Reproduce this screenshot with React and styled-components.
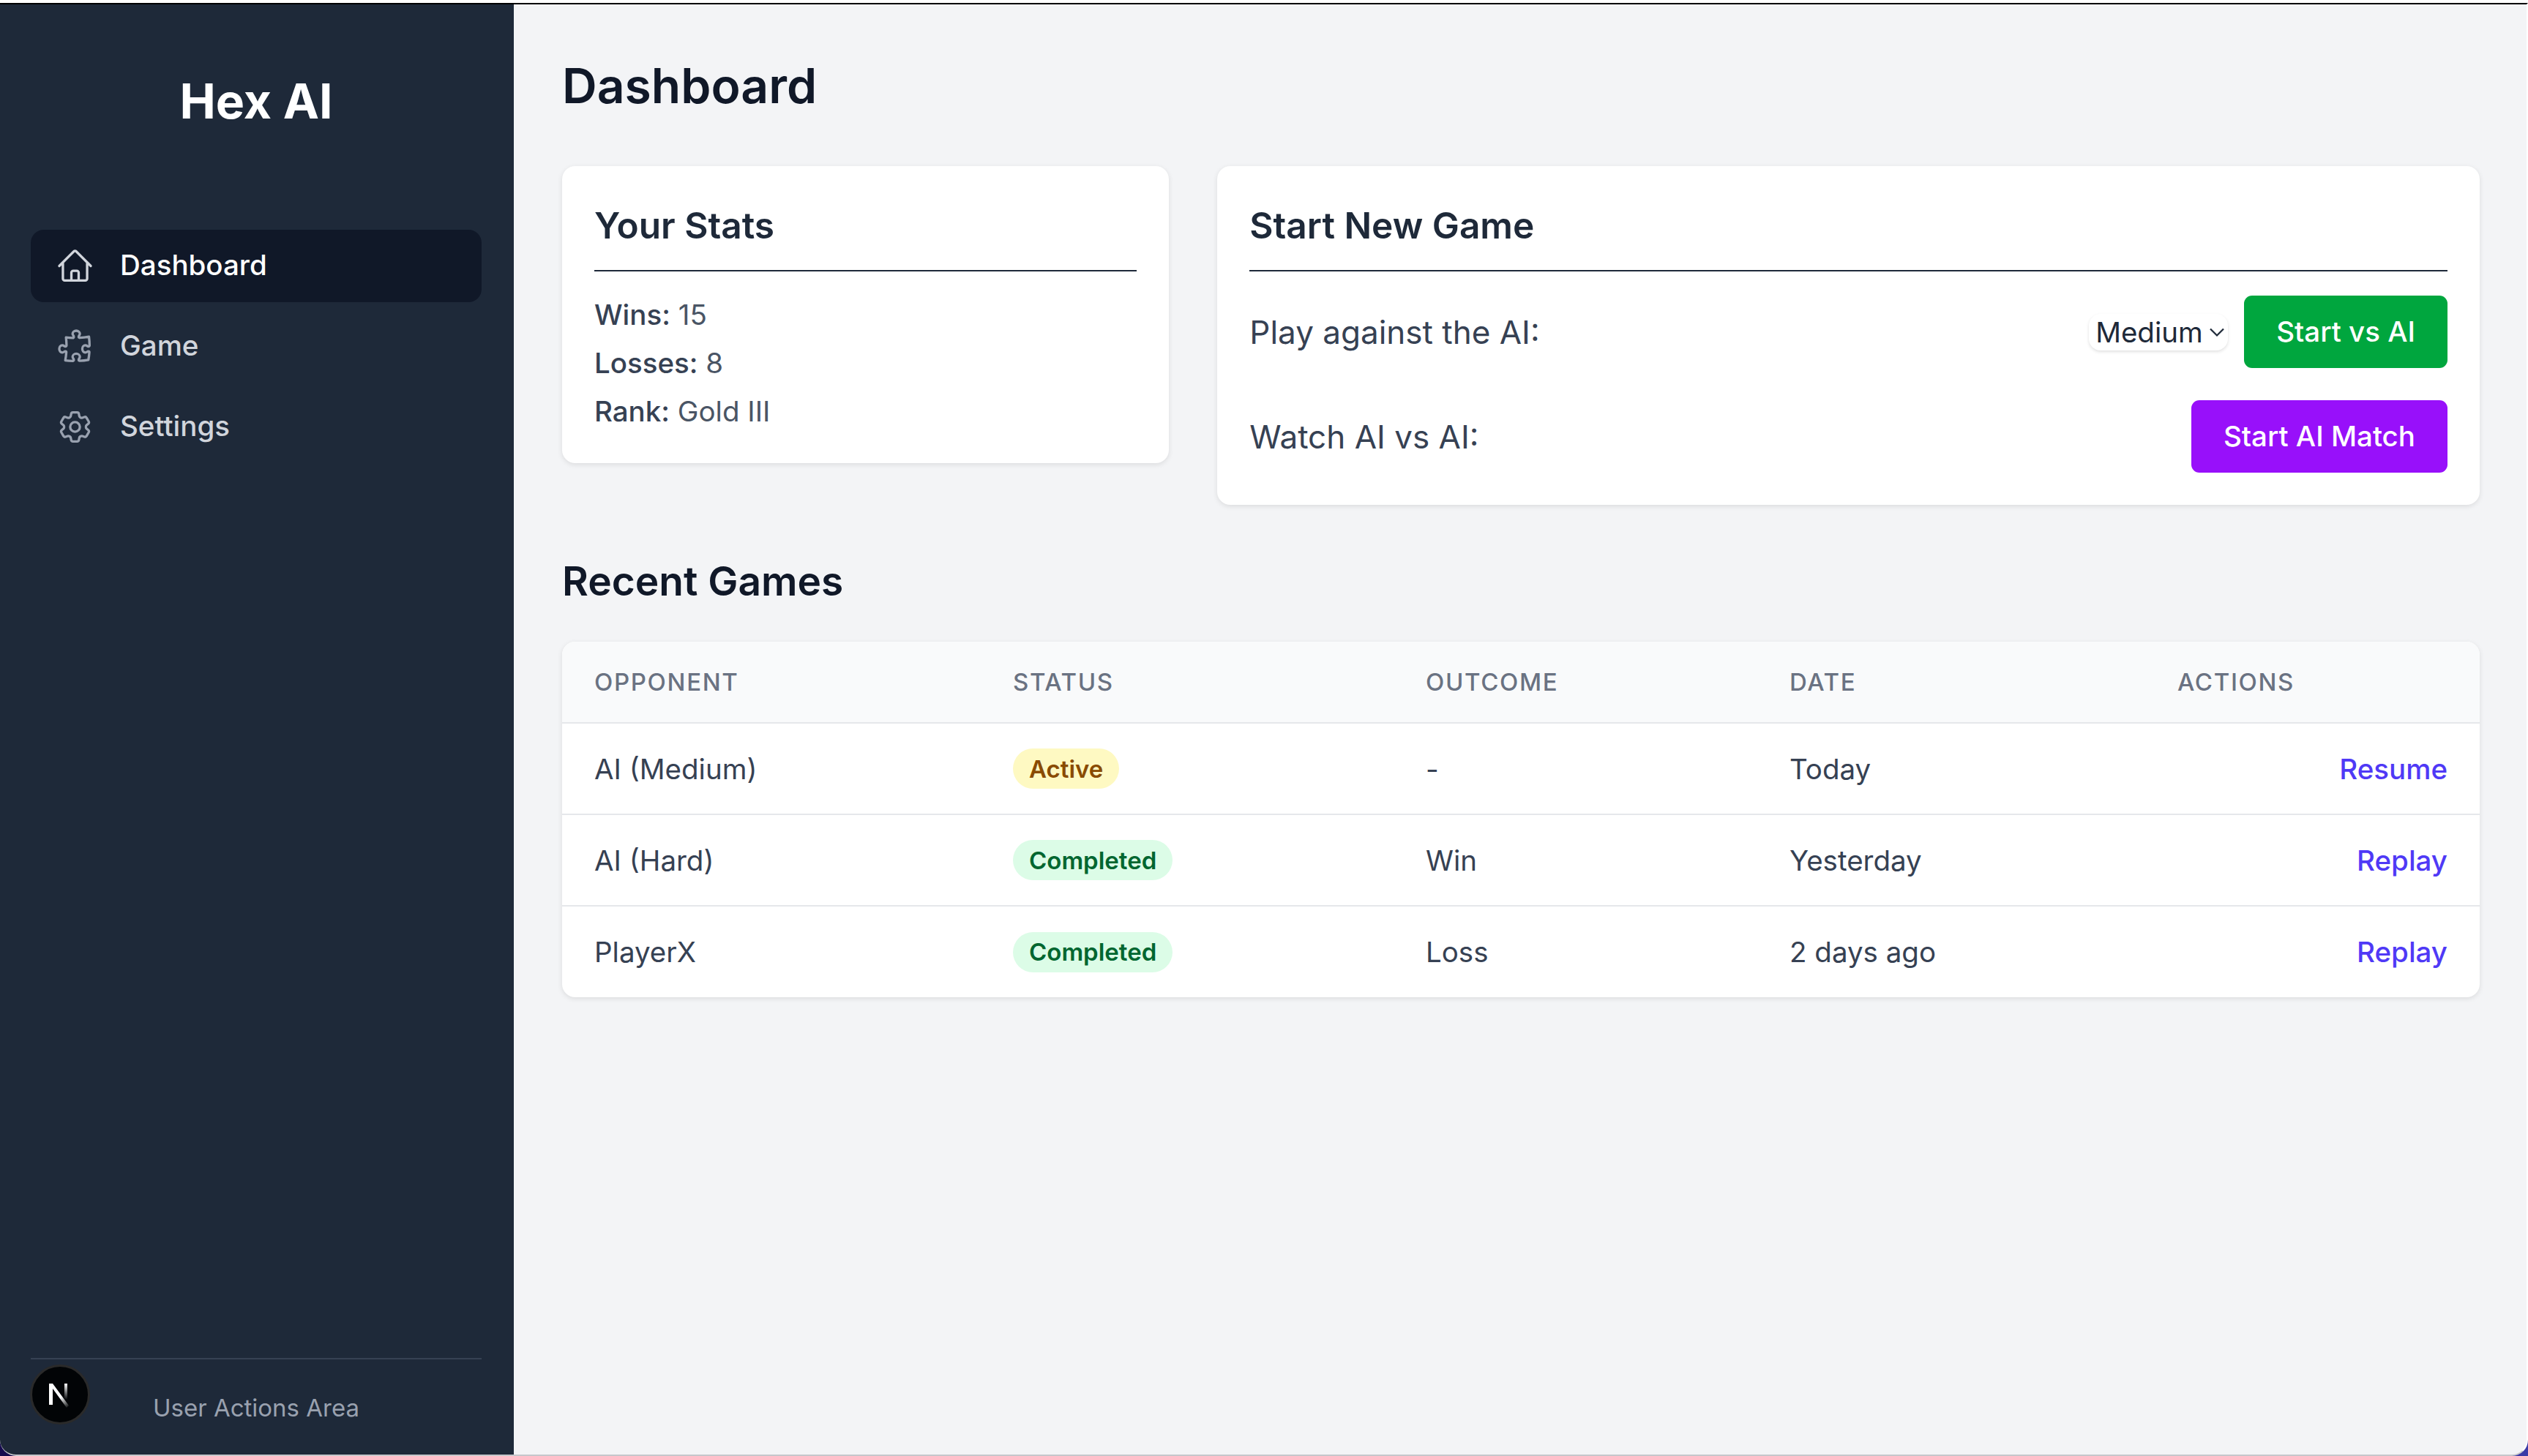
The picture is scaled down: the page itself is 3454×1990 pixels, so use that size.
import React from "react";
import styled, { createGlobalStyle } from "styled-components";
import { HiOutlineHome, HiOutlinePuzzlePiece, HiOutlineCog6Tooth } from "react-icons/hi2";

const Global = createGlobalStyle`
  * { box-sizing: border-box; }
  html, body { margin: 0; padding: 0; background: #fff; }
  body { font-family: Inter, "Liberation Sans", sans-serif; -webkit-font-smoothing: antialiased; }
`;

const Desktop = styled.div`
  width: 3454px;
  height: 1990px;
  padding-top: 4px;
  background: linear-gradient(#fff 0 4px, transparent 4px), linear-gradient(90deg, #160a4e 0%, #3a3aa6 100%);
  overflow: hidden;
`;
const Frame = styled.div`
  width: 100%;
  height: 1986px;
  display: flex;
  overflow: hidden;
  position: relative;
  background: #f3f4f6;
  border-top: 2px solid #000;
  border-right: 2px solid #fff;
  border-bottom: 2px solid #c6c7cb;
  border-radius: 0 0 22px 22px;
`;
const Sidebar = styled.aside`
  flex: none;
  width: 702px;
  display: flex;
  flex-direction: column;
  padding: 0 44px 0 42px;
  background: #1e2939;
`;
const Logo = styled.h1`
  margin: 95px 0 1px;
  height: 74px;
  font-size: 66px;
  line-height: 74px;
  font-weight: 700;
  text-align: center;
  color: #fff;
`;
const Nav = styled.nav`
  margin-top: 138px;
  display: flex;
  flex-direction: column;
  gap: 11px;
  flex: 1;
`;
const NavItem = styled.a`
  display: flex;
  align-items: center;
  gap: 35px;
  height: 99px;
  padding: 0 34px 3px;
  border-radius: 18px;
  font-size: 38.5px;
  font-weight: 500;
  color: ${(p) => (p.$active ? "#fff" : "#d1d5dc")};
  background: ${(p) => (p.$active ? "#101828" : "transparent")};
  svg {
    flex: none;
    width: 53px;
    height: 53px;
    margin-bottom: -3px;
    color: ${(p) => (p.$active ? "#d1d5dc" : "#99a1af")};
  }
`;
const SideFooter = styled.div`
  height: 132px;
  padding-top: 44px;
  border-top: 2px solid #364153;
  font-size: 33px;
  line-height: 44px;
  text-align: center;
  color: #99a1af;
`;
const DevBadge = styled.div`
  position: absolute;
  left: 41px;
  bottom: 41px;
  width: 82px;
  height: 82px;
  display: flex;
  align-items: center;
  justify-content: center;
  border-radius: 50%;
  background: #020406;
  border: 3px solid #2a2a2a;
`;
const Main = styled.main`
  flex: 1;
  min-width: 0;
  padding: 72px 64px 0 66px;
`;
const PageTitle = styled.h2`
  margin: 0 0 70px;
  font-size: 66px;
  line-height: 79px;
  font-weight: 600;
  color: #101828;
`;
const TopGrid = styled.div`
  display: grid;
  grid-template-columns: repeat(3, 1fr);
  gap: 66px;
  align-items: start;
`;
const Card = styled.section`
  grid-column: span ${(p) => p.$span || 1};
  padding: 44px;
  border-radius: 18px;
  background: #fff;
  box-shadow: 0 2px 7px rgba(0, 0, 0, 0.1);
`;
const CardTitle = styled.h3`
  margin: 0 0 33px;
  padding-bottom: 24px;
  font-size: 49.6px;
  line-height: 74px;
  font-weight: 600;
  color: #1e2939;
  border-bottom: 2px solid #1e2939;
`;
const StatList = styled.div`
  display: flex;
  flex-direction: column;
  gap: 13.2px;
`;
const Stat = styled.div`
  font-size: 38.5px;
  line-height: 52.8px;
  color: #4a5565;
  b {
    font-weight: 500;
    color: #364153;
  }
`;
const GameRows = styled.div`
  display: flex;
  flex-direction: column;
  gap: 44px;
`;
const GameRow = styled.div`
  display: flex;
  align-items: center;
  justify-content: space-between;
`;
const GameLabel = styled.span`
  font-size: 44px;
  color: #364153;
`;
const Controls = styled.div`
  display: flex;
  align-items: center;
  gap: 22px;
`;
const Select = styled.div`
  display: flex;
  align-items: center;
  gap: 4px;
  width: 190px;
  height: 50px;
  padding-left: 9px;
  border-radius: 16px;
  background: #fff;
  box-shadow: 0 2px 4px rgba(0, 0, 0, 0.12);
  font-size: 38.5px;
  color: #1e2939;
  svg {
    flex: none;
    width: 30px;
    height: 30px;
  }
`;
const Button = styled.button`
  height: 99px;
  padding: 0 44px 2px;
  border: 0;
  border-radius: 11px;
  font: 500 38.5px Inter, sans-serif;
  color: #fff;
  background: ${(p) => p.$color};
`;
const SectionTitle = styled.h2`
  margin: 65px 0 43px;
  font-size: 55px;
  line-height: 79px;
  font-weight: 600;
  color: #101828;
`;
const TableCard = styled.div`
  overflow: hidden;
  border-radius: 18px;
  background: #fff;
  box-shadow: 0 2px 7px rgba(0, 0, 0, 0.1);
`;
const Table = styled.table`
  width: 100%;
  table-layout: fixed;
  border-collapse: collapse;
  th:nth-child(1) { width: 572px; }
  th:nth-child(2) { width: 564px; }
  th:nth-child(3) { width: 497px; }
  th:nth-child(4) { width: 530px; }
`;
const Th = styled.th`
  height: 111px;
  padding: 0 44px;
  text-align: left;
  font-size: 33px;
  font-weight: 500;
  letter-spacing: 0.05em;
  color: #6a7282;
  background: #f9fafb;
  border-bottom: 2px solid #e5e7eb;
`;
const Td = styled.td`
  height: 125px;
  padding: 0 44px;
  font-size: 38.5px;
  color: #364153;
  text-align: ${(p) => (p.$end ? "right" : "left")};
  tr:not(:last-child) > & {
    border-bottom: 2px solid #e5e7eb;
  }
`;
const Badge = styled.span`
  display: inline-flex;
  align-items: center;
  height: 55px;
  padding: 0 22px;
  border-radius: 28px;
  font-size: 33px;
  font-weight: 600;
  color: ${(p) => (p.$active ? "#894b00" : "#016630")};
  background: ${(p) => (p.$active ? "#fef9c2" : "#dcfce7")};
`;
const Action = styled.a`
  font-weight: 500;
  color: #4f39f6;
`;

const games = [
  { who: "AI (Medium)", status: "Active", out: "-", date: "Today", act: "Resume" },
  { who: "AI (Hard)", status: "Completed", out: "Win", date: "Yesterday", act: "Replay" },
  { who: "PlayerX", status: "Completed", out: "Loss", date: "2 days ago", act: "Replay" },
];

export default function App() {
  return (
    <Desktop>
      <Global />
      <Frame>
        <Sidebar>
          <Logo>Hex AI</Logo>
          <Nav>
            <NavItem $active><HiOutlineHome />Dashboard</NavItem>
            <NavItem><HiOutlinePuzzlePiece />Game</NavItem>
            <NavItem><HiOutlineCog6Tooth />Settings</NavItem>
          </Nav>
          <SideFooter>User Actions Area</SideFooter>
        </Sidebar>
        <DevBadge>
          <svg width="44" height="44" viewBox="0 0 44 44" fill="none">
            <defs>
              <linearGradient id="nd" x1="10" y1="8" x2="34" y2="40" gradientUnits="userSpaceOnUse">
                <stop offset="0.55" stopColor="#fff" />
                <stop offset="1" stopColor="#fff" stopOpacity="0" />
              </linearGradient>
              <linearGradient id="nr" x1="30" y1="7" x2="30" y2="29" gradientUnits="userSpaceOnUse">
                <stop stopColor="#fff" />
                <stop offset="1" stopColor="#fff" stopOpacity="0" />
              </linearGradient>
            </defs>
            <path d="M7 7h5v29H7z" fill="#fff" />
            <path d="M7 7h5l22 30-3 3z" fill="url(#nd)" />
            <path d="M28 7h4v22h-4z" fill="url(#nr)" />
          </svg>
        </DevBadge>
        <Main>
          <PageTitle>Dashboard</PageTitle>
          <TopGrid>
            <Card>
              <CardTitle>Your Stats</CardTitle>
              <StatList>
                <Stat><b>Wins:</b> 15</Stat>
                <Stat><b>Losses:</b> 8</Stat>
                <Stat><b>Rank:</b> Gold III</Stat>
              </StatList>
            </Card>
            <Card $span={2}>
              <CardTitle>Start New Game</CardTitle>
              <GameRows>
                <GameRow>
                  <GameLabel>Play against the AI:</GameLabel>
                  <Controls>
                    <Select>
                      Medium
                      <svg viewBox="0 0 20 20" fill="none" stroke="#1e2939" strokeWidth="1.5">
                        <path d="M4 7l6 6 6-6" />
                      </svg>
                    </Select>
                    <Button $color="#00a63e">Start vs AI</Button>
                  </Controls>
                </GameRow>
                <GameRow>
                  <GameLabel>Watch AI vs AI:</GameLabel>
                  <Button $color="#9810fa">Start AI Match</Button>
                </GameRow>
              </GameRows>
            </Card>
          </TopGrid>
          <SectionTitle>Recent Games</SectionTitle>
          <TableCard>
            <Table>
              <thead>
                <tr>
                  <Th>OPPONENT</Th>
                  <Th>STATUS</Th>
                  <Th>OUTCOME</Th>
                  <Th>DATE</Th>
                  <Th>ACTIONS</Th>
                </tr>
              </thead>
              <tbody>
                {games.map((g) => (
                  <tr key={g.who}>
                    <Td>{g.who}</Td>
                    <Td><Badge $active={g.status === "Active"}>{g.status}</Badge></Td>
                    <Td>{g.out}</Td>
                    <Td>{g.date}</Td>
                    <Td $end><Action>{g.act}</Action></Td>
                  </tr>
                ))}
              </tbody>
            </Table>
          </TableCard>
        </Main>
      </Frame>
    </Desktop>
  );
}
